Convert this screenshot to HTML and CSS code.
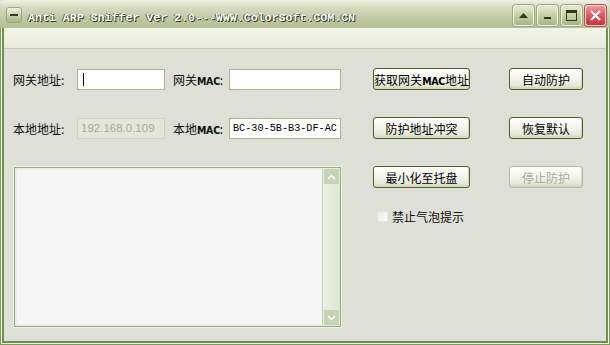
FILE: index.html
```html
<!DOCTYPE html>
<html lang="zh-CN">
<head>
    <meta charset="UTF-8">
    <title>Anti ARP Sniffer</title>
    <link rel="stylesheet" href="styles.css">
</head>
<body>
    <div class="window">
        <!-- Title bar -->
        <div class="titlebar">
            <div class="sys-icon"><span></span></div>
            <div class="title">Anti ARP Sniffer Ver 2.0---WWW.ColorSoft.COM.CN</div>
            <div class="caption-btns">
                <div class="cap-btn">
                    <svg width="11" height="7" viewBox="0 0 11 7"><path d="M1 6 L5.5 1 L10 6 Z" fill="#2d3a1c"/></svg>
                </div>
                <div class="cap-btn">
                    <svg width="9" height="9" viewBox="0 0 9 9"><rect x="1" y="6" width="7" height="2" fill="#2d3a1c"/></svg>
                </div>
                <div class="cap-btn">
                    <svg width="13" height="13" viewBox="0 0 13 13"><rect x="1.5" y="1.5" width="10" height="10" fill="none" stroke="#2d3a1c"/><rect x="1" y="1" width="11" height="3" fill="#2d3a1c"/></svg>
                </div>
                <div class="cap-btn close">
                    <svg width="13" height="13" viewBox="0 0 13 13"><path d="M2 2 L11 11 M11 2 L2 11" stroke="#fff" stroke-width="2.2"/></svg>
                </div>
            </div>
        </div>

        <!-- Frame -->
        <div class="frame">
            <div class="inner">
                <div class="toolbar"></div>
                <div class="client">
                    <div class="form">
                        <label class="lbl">网关地址:</label>
                        <div class="field caret"><span></span></div>
                        <label class="lbl pad">网关<span class="latin">MAC</span>:</label>
                        <div class="field"></div>

                        <label class="lbl">本地地址:</label>
                        <div class="field disabled">192.168.0.109</div>
                        <label class="lbl pad">本地<span class="latin">MAC</span>:</label>
                        <div class="field mono">BC-30-5B-B3-DF-AC</div>

                        <div class="log">
                            <div class="log-area"></div>
                            <div class="scrollbar">
                                <div class="sb-btn">
                                    <svg width="9" height="6" viewBox="0 0 9 6"><path d="M1 5 L4.5 1.5 L8 5" fill="none" stroke="#fff" stroke-width="1.4"/></svg>
                                </div>
                                <div class="sb-track"></div>
                                <div class="sb-btn">
                                    <svg width="9" height="6" viewBox="0 0 9 6"><path d="M1 1 L4.5 4.5 L8 1" fill="none" stroke="#fff" stroke-width="1.4"/></svg>
                                </div>
                            </div>
                        </div>
                    </div>

                    <div class="actions">
                        <button class="btn">获取网关<span class="latin">MAC</span>地址</button>
                        <button class="btn">自动防护</button>
                        <button class="btn">防护地址冲突</button>
                        <button class="btn">恢复默认</button>
                        <button class="btn">最小化至托盘</button>
                        <button class="btn" disabled>停止防护</button>
                        <label class="check"><span class="box"></span>禁止气泡提示</label>
                    </div>
                </div>
            </div>
        </div>
    </div>
</body>
</html>
```

FILE: styles.css
```css
/* ======= General ======= */
body {
    margin: 0;
    padding: 0;
    background: #ffffff;
    font-family: "Noto Sans CJK SC", "DejaVu Sans", sans-serif;
    font-size: 12px;
    color: #000;
}

.window {
    width: 610px;
    height: 345px;
    display: flex;
    flex-direction: column;
    background: #dedfd6;
}

.latin {
    font-family: "DejaVu Sans Condensed", "Liberation Sans Narrow", sans-serif;
    font-size: 10.5px;
    font-weight: bold;
    letter-spacing: -0.3px;
}

/* ======= Title bar ======= */
.titlebar {
    height: 28px;
    flex-shrink: 0;
    display: flex;
    align-items: center;
    padding: 2px 4px 0 6px;
    background: linear-gradient(to bottom, #f0f2e4 0%, #d6dcc0 25%, #c3cba6 60%, #b3bd92 100%);
    border-radius: 6px 6px 0 0;
    box-sizing: border-box;
}

.sys-icon {
    width: 16px;
    height: 16px;
    border: 1px solid #9aa680;
    border-radius: 3px;
    background: linear-gradient(to bottom, #eef1e2, #a8b387);
    box-sizing: border-box;
    display: flex;
    align-items: center;
    justify-content: center;
}

.sys-icon span {
    width: 8px;
    height: 2px;
    background: #333d22;
}

.title {
    margin-left: 6px;
    padding-top: 4px;
    flex-grow: 1;
    font-family: "Liberation Mono", monospace;
    font-weight: bold;
    font-size: 11.6px;
    color: #ffffff;
    text-shadow: 1px 1px 0 #2f3a1f, -1px 0 0 #4a5530;
    white-space: nowrap;
}

.caption-btns {
    display: flex;
    gap: 3px;
}

.cap-btn {
    width: 21px;
    height: 21px;
    border: 1px solid #f4f6ea;
    border-radius: 3px;
    background: linear-gradient(to bottom, #e6ebd2, #c3cca2 55%, #a9b583);
    box-sizing: border-box;
    display: flex;
    align-items: center;
    justify-content: center;
    box-shadow: 0 0 0 1px #9ba77c;
}

.cap-btn.close {
    background: linear-gradient(to bottom, #f09a9a, #e0525a 55%, #c8343e);
    border-color: #f8d6d6;
    box-shadow: 0 0 0 1px #b4505a;
}

/* ======= Frame ======= */
.frame {
    flex-grow: 1;
    border: 1px solid #7c9c5c;
    border-top: none;
    padding: 0 1px 1px 1px;
    background: #f2f4ec;
    display: flex;
}

.inner {
    flex-grow: 1;
    border: 2px solid #6f9150;
    border-top: none;
    display: flex;
    flex-direction: column;
    background: #dedfd6;
}

.toolbar {
    height: 20px;
    background: linear-gradient(to bottom, #f3f5ea, #e7eadb);
    border-bottom: 1px solid #c4cab0;
}

/* ======= Client ======= */
.client {
    flex-grow: 1;
    display: flex;
    padding: 20px 0 0 9px;
}

.form {
    display: grid;
    grid-template-columns: 64px 88px 64px 112px;
    grid-template-rows: 21px 21px 1fr;
    row-gap: 28px;
    width: 328px;
    height: 257px;
}

.lbl {
    align-self: center;
    white-space: nowrap;
    color: #111;
}

.lbl.pad {
    padding-left: 8px;
}

.field {
    background: #fff;
    border: 1px solid #a2bc86;
    box-sizing: border-box;
    height: 21px;
    padding: 0 4px;
    line-height: 19px;
    font-size: 11.5px;
    white-space: nowrap;
    overflow: hidden;
}

.field.caret span {
    display: inline-block;
    width: 1px;
    height: 13px;
    margin-top: 3px;
    margin-left: 1px;
    background: #000;
    vertical-align: top;
}

.field.disabled {
    background: #e4e5dd;
    border-color: #c8d6b6;
    color: #aca899;
    font-family: "Liberation Sans", sans-serif;
    padding: 0 3px;
}

.field.mono {
    font-family: "Liberation Mono", monospace;
    font-size: 10.2px;
    padding: 0 3px;
}

/* ======= Log area ======= */
.log {
    grid-column: 1 / 5;
    margin-left: 1px;
    width: 327px;
    height: 160px;
    display: flex;
    border: 1px solid #8fae70;
    box-shadow: 0 0 0 1px #f1f2ea;
    box-sizing: border-box;
    background: #f6f6f6;
}

.log-area {
    flex-grow: 1;
    border: 2px solid #ececea;
    border-right: 1px solid #c7d2b5;
}

.scrollbar {
    width: 17px;
    display: flex;
    flex-direction: column;
    background: linear-gradient(to right, #eef1e6, #dfe5d2);
}

.sb-btn {
    height: 17px;
    display: flex;
    align-items: center;
    justify-content: center;
    background: #c7d3b6;
    border: 1px solid #e6ecdc;
    box-sizing: border-box;
}

.sb-track {
    flex-grow: 1;
}

/* ======= Buttons ======= */
.actions {
    margin-left: 32px;
    display: grid;
    grid-template-columns: 97px 74px;
    grid-template-rows: 22px 22px 22px;
    column-gap: 39px;
    row-gap: 27px;
    align-content: start;
    margin-top: -1px;
}

.btn {
    font-family: "Noto Sans CJK SC", sans-serif;
    font-size: 12px;
    height: 22px;
    padding: 0;
    border: 1px solid #4d6220;
    border-radius: 3px;
    background: linear-gradient(to bottom, #ffffff 0%, #f4f4ec 50%, #e4e6d6 85%, #c8ceb4 100%);
    color: #000;
    white-space: nowrap;
    box-shadow: inset -1px -1px 0 #d2d8bf;
}

.btn:disabled {
    color: #aca899;
    border-color: #b7bba4;
}

.check {
    grid-column: 1 / 3;
    margin-top: -7px;
    margin-left: 4px;
    display: flex;
    align-items: center;
    gap: 4px;
    color: #111;
}

.check .box {
    width: 11px;
    height: 11px;
    background: linear-gradient(to bottom right, #e8e8e2, #ffffff);
    border: 1px solid #e6e6e0;
    box-sizing: border-box;
}
```
